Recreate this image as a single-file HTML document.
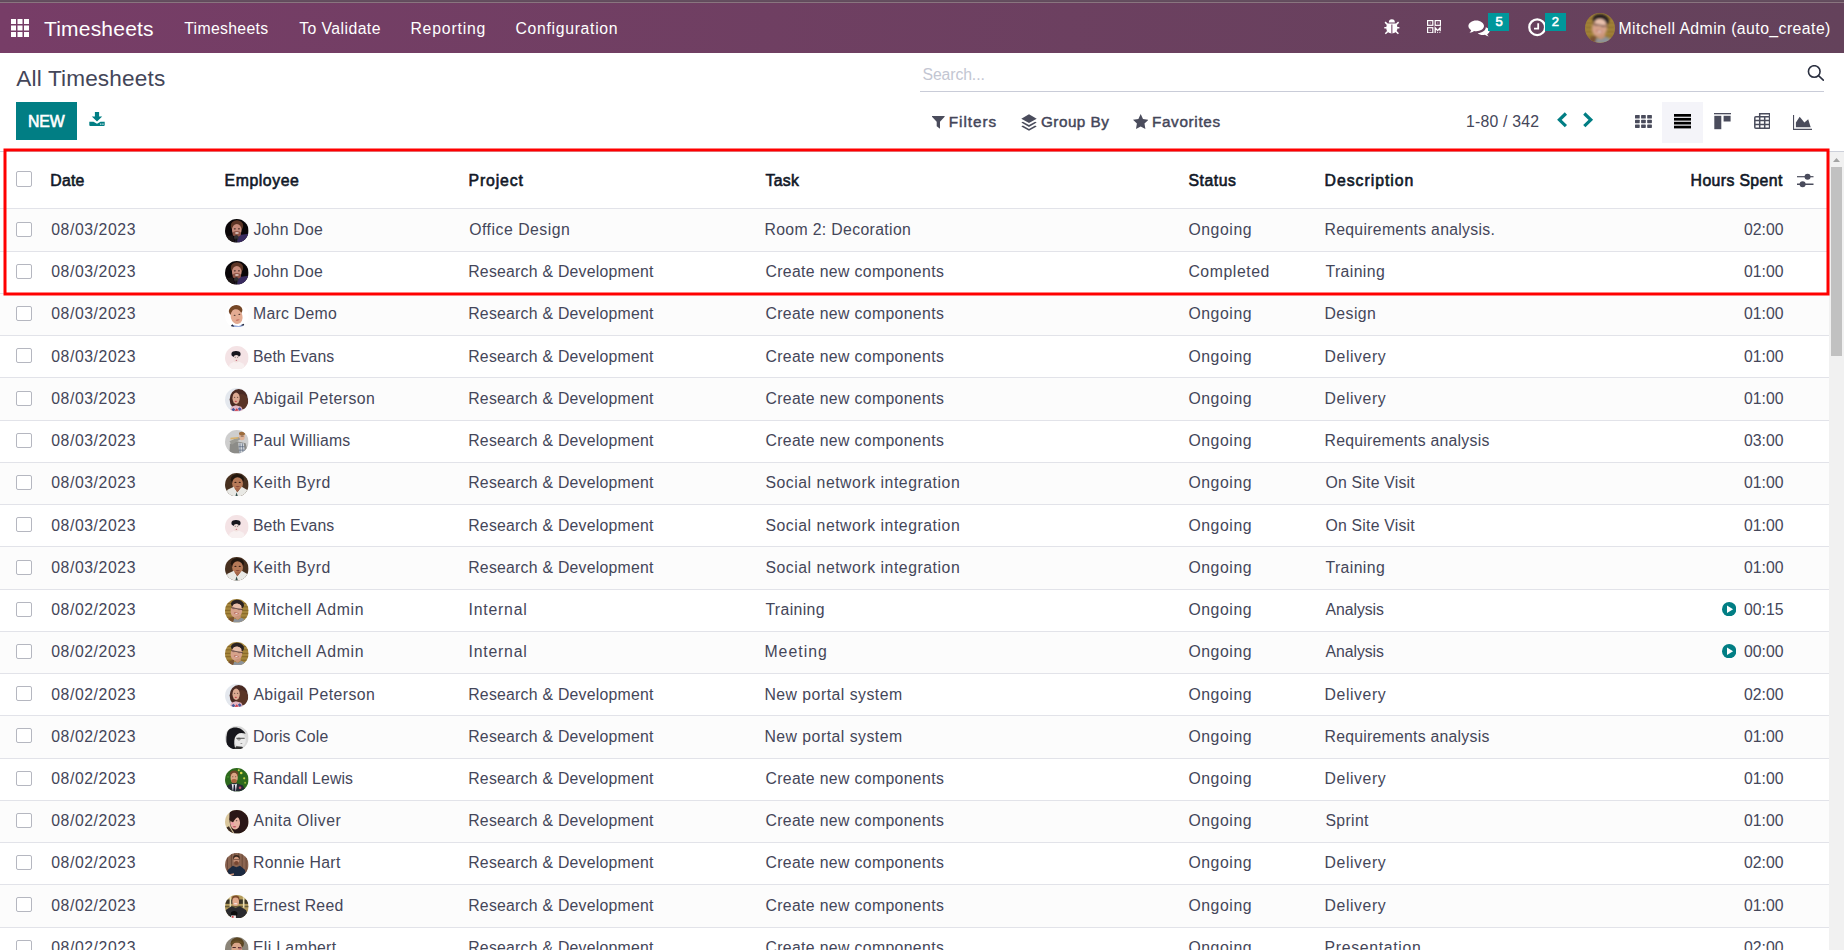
<!DOCTYPE html><html lang="en"><head><meta charset="utf-8"><title>Odoo - All Timesheets</title><style>
*{box-sizing:border-box;margin:0;padding:0}
html,body{width:1844px;height:950px;overflow:hidden;background:#fff}
body{position:relative;font-family:"Liberation Sans",Arial,sans-serif;color:#444659;font-size:15.8px}
.t{position:absolute;white-space:nowrap;line-height:1;display:block}
.abs{position:absolute;display:block}
#strip{left:0;top:0;width:1844px;height:3px;background:linear-gradient(#644e5f 0,#644e5f 1px,#624a5c 1px,#624a5c 2px,#89757f 2px,#89757f 3px)}
#nav{left:0;top:3px;width:1844px;height:50px;background:linear-gradient(90deg,#773d67,#64425b);color:#fff}
#nav .t{color:#fff}
.badge{position:absolute;background:#00979b;color:#fff;height:18px;top:10.400px}
#cp{left:0;top:53px;width:1844px;height:99px;background:#fff;border-bottom:1px solid #cdd0da}
#list{left:0;top:152px;width:1829px;height:798px;overflow:hidden;background:#fff}
.row{position:absolute;left:0;width:1829px;border-top:1px solid #e2e3e9}
.row.odd{background:#fcfcfc}
.cb{position:absolute;left:16px;width:16px;height:15px;border:1px solid #b5b7c0;border-radius:2px;background:#fff}
#sb{left:1829px;top:152px;width:15px;height:798px;background:#f1f1f1}
#sb i{position:absolute;left:2px;top:15px;width:11px;height:189px;background:#c1c1c1}
</style></head><body>
<div id="strip" class="abs"></div>
<header id="nav" class="abs">
<svg class="abs" style="left:11px;top:16px" width="18" height="18" viewBox="0 0 18 18" fill="#fff"><rect x="0.0" y="0.0" width="5" height="5"/><rect x="6.5" y="0.0" width="5" height="5"/><rect x="13.0" y="0.0" width="5" height="5"/><rect x="0.0" y="6.5" width="5" height="5"/><rect x="6.5" y="6.5" width="5" height="5"/><rect x="13.0" y="6.5" width="5" height="5"/><rect x="0.0" y="13.0" width="5" height="5"/><rect x="6.5" y="13.0" width="5" height="5"/><rect x="13.0" y="13.0" width="5" height="5"/></svg>
<a class="t" style="left:43.90px;top:14.92px;font-size:21px;letter-spacing:0.216px;">Timesheets</a>
<nav>
<a class="t" style="left:184.20px;top:18.23px;font-size:15.8px;letter-spacing:0.327px;">Timesheets</a>
<a class="t" style="left:299.20px;top:18.23px;font-size:15.8px;letter-spacing:0.430px;">To Validate</a>
<a class="t" style="left:410.40px;top:18.23px;font-size:15.8px;letter-spacing:0.811px;">Reporting</a>
<a class="t" style="left:515.50px;top:18.23px;font-size:15.8px;letter-spacing:0.677px;">Configuration</a>
</nav>
<svg class="abs" style="left:1384px;top:16px" width="16" height="16" viewBox="0 0 16 16" fill="#fff" stroke="#fff" stroke-linecap="butt">
<path d="M4.800 3.600A3.050 3.450 0 0 1 10.900 3.600z" stroke="none"/>
<path d="M3.600 4.500h8.500c.9 1.200 1.300 2.800 1.300 4.400 0 3.300-2.300 5.400-5.550 5.400s-5.550-2.100-5.550-5.400c0-1.600.4-3.200 1.300-4.400z" stroke="none"/>
<path d="M0.300 8.700h2.600M12.800 8.700h2.600M1.100 3.100l2.500 2.500M14.600 3.100l-2.500 2.500M1.300 14.800l2.500-2.400M14.400 14.800l-2.500-2.400" stroke-width="1.500" fill="none"/>
<path d="M7.850 5.400v8.600" stroke="#7a4a6c" stroke-width="1.100"/></svg>
<svg class="abs" style="left:1427px;top:16.8px" width="14" height="13.500" viewBox="0 0 14 13.500" fill="none" stroke="#fff" stroke-width="1.200">
<rect x="0.600" y="0.600" width="5.200" height="4.700"/><rect x="8.200" y="0.600" width="5.200" height="4.700"/><rect x="0.600" y="7.700" width="5.200" height="5.100"/>
<path d="M3.200 2.300v1.300M10.800 2.300v1.300M3.200 9.600v1.300" stroke-width=".8" opacity=".8"/>
<path d="M8.200 13.400V7.700l2.400 2.900 2.600-2.900v3.500" stroke-width="1.300"/><path d="M10 12.900h1.100M12.200 12.900h1.200" stroke-width="1.100"/></svg>
<svg class="abs" style="left:1468px;top:16.5px" width="22" height="17" viewBox="0 0 22 17" fill="#fff">
<path d="M8.2 0.4C3.9 0.4 0.4 2.9 0.4 6c0 1.7 1.1 3.2 2.8 4.2-.3.9-.9 1.8-1.7 2.5 1.7-.1 3.3-.8 4.5-1.7.7.1 1.4.2 2.2.2 4.3 0 7.8-2.3 7.8-5.2S12.500.4 8.200.4z"/>
<path d="M17.8 7.300c0 3.200-3.600 5.600-8.100 5.900 1.200 1.100 3.100 1.800 5.200 1.800.7 0 1.400-.1 2-.2 1 .8 2.300 1.400 3.800 1.600-.7-.6-1.200-1.400-1.500-2.200 1.500-.8 2.400-2 2.400-3.400 0-1.500-1.500-2.800-3.800-3.500z"/></svg>
<span class="badge" style="left:1488px;width:21px"><span class="t" style="left:7.40px;top:1.20px;font-size:13px;letter-spacing:0.000px;-webkit-text-stroke:0.6px currentColor;">5</span></span>
<svg class="abs" style="left:1528px;top:15.3px" width="18.4" height="18.4" viewBox="0 0 18.4 18.4" fill="none" stroke="#fff">
<circle cx="9.2" cy="9.2" r="7.900" stroke-width="2.300"/><path d="M10.200 5.200v5.400h-4.200" stroke-width="1.800"/></svg>
<span class="badge" style="left:1545px;width:21px"><span class="t" style="left:6.70px;top:1.20px;font-size:13px;letter-spacing:0.000px;-webkit-text-stroke:0.6px currentColor;">2</span></span>
<span class="abs" style="left:1585px;top:10px;width:30px;height:30px"><svg width="100%" height="100%" viewBox="0 0 24 24" style="display:block"><defs><clipPath id="c1"><circle cx="12" cy="12" r="12"/></clipPath><filter id="f1" x="-10%" y="-10%" width="120%" height="120%"><feGaussianBlur stdDeviation="0.7"/></filter></defs><g clip-path="url(#c1)"><rect width="24" height="24" fill="#a6863c"/><g filter="url(#f1)"><path d="M0 4.500h24M0 8h24M0 11.500h24M0 15h24M0 18.500h24" stroke="#7a5c22" stroke-width=".8"/><ellipse cx="12.700" cy="5.600" rx="6.700" ry="4.800" fill="#2b2421" transform="rotate(10 12.700 5.600)"/><ellipse cx="11.600" cy="12" rx="5.900" ry="7.400" fill="#d6a28a" transform="rotate(8 11.600 12)"/><ellipse cx="12.400" cy="7.300" rx="4.300" ry="2.400" fill="#e8c0ac" transform="rotate(10 12.400 7.300)"/><path d="M6.300 8.700l12 2.300" stroke="#4e3c3c" stroke-width="1" opacity=".8"/><ellipse cx="8.700" cy="9.600" rx="1.500" ry=".8" fill="#7a5650" opacity=".6"/><ellipse cx="14.300" cy="10.600" rx="1.500" ry=".8" fill="#7a5650" opacity=".6"/><ellipse cx="11.500" cy="14.600" rx="2.600" ry=".9" fill="#b86a60" transform="rotate(8 11.500 14.600)"/><ellipse cx="11.600" cy="14.800" rx="1.700" ry=".5" fill="#f4ebe8"/><path d="M2 24l2-4.500 5-1.500 0 6z" fill="#7a5232"/><path d="M8 24l1.500-4 4 1 3-2 5 2.500 2 2.500z" fill="#8d939b"/><path d="M9.300 18.300l3.200 2.900 3.700-2.400-.5-2.600z" fill="#c99478"/></g></g></svg></span>
<span class="t" style="left:1618.40px;top:17.93px;font-size:15.8px;letter-spacing:0.437px;">Mitchell Admin (auto_create)</span>
</header>
<section id="cp" class="abs">
<h1 class="t" style="left:16.30px;top:15.17px;font-size:22.6px;letter-spacing:0.152px;font-weight:400;">All Timesheets</h1>
<span class="t" style="left:922.50px;top:14.23px;font-size:15.8px;letter-spacing:-0.116px;color:#c3c6d2;">Search...</span>
<div class="abs" style="left:920px;top:38px;width:904px;height:1px;background:#c9ccd8"></div>
<svg class="abs" style="left:1807px;top:12px" width="17" height="17" viewBox="0 0 17 17" fill="none" stroke="#2b3040" stroke-width="1.600" stroke-linecap="round"><circle cx="7.250" cy="6.500" r="5.800"/><path d="M11.500 10.700l4.800 4.500"/></svg>
<button class="abs" style="left:16px;top:49px;width:61px;height:38px;background:#017e84;border:0;font-family:inherit;text-align:left"><span class="t" style="left:12.00px;top:11.63px;font-size:15.8px;letter-spacing:-0.072px;-webkit-text-stroke:0.6px currentColor;color:#fff;">NEW</span></button>
<svg class="abs" style="left:88.700px;top:59px" width="16" height="14" viewBox="0 0 16 14.500" preserveAspectRatio="none" fill="#017e84">
<path d="M5.900 0h4.200v4.600h3.100L8 9.800 2.800 4.600h3.100z"/><path d="M0.300 10.200h4.200l3.500 2 3.500-2h4.200v3.300a.9.900 0 0 1-.9.900H1.200a.9.900 0 0 1-.9-.9z"/><rect x="11.100" y="12" width="1.300" height="1.100" fill="#fff"/><rect x="13.300" y="12" width="1.300" height="1.100" fill="#fff"/></svg>
<svg class="abs" style="left:932.300px;top:63.3px" width="12.600" height="12.800" viewBox="0 0 12.600 12.800" fill="#4a4c5c"><path d="M0.300 0h12a.4.400 0 0 1 .3.700L8 5.800v7L4.700 10.200V5.800L0 .7a.4.400 0 0 1 .3-.7z"/></svg>
<span class="t m" style="left:948.70px;top:60.95px;font-size:15.3px;letter-spacing:0.985px;-webkit-text-stroke:0.45px currentColor;">Filters</span>
<svg class="abs" style="left:1020.500px;top:60.8px" width="16" height="18.300" viewBox="0 0 16 16" preserveAspectRatio="none" fill="#4a4c5c"><path d="M8 0.300l7.700 3.800L8 7.900 0.300 4.100z"/><path d="M8 9.700L1.900 6.700 0.300 7.500 8 11.300l7.700-3.800-1.600-.8z"/><path d="M8 13.100L1.900 10.100 0.300 10.900 8 14.700l7.700-3.800-1.600-.8z"/></svg>
<span class="t m" style="left:1041.00px;top:60.95px;font-size:15.3px;letter-spacing:0.462px;-webkit-text-stroke:0.45px currentColor;">Group By</span>
<svg class="abs" style="left:1132.700px;top:61px" width="15.400" height="15" viewBox="0 0 15.400 14.600" preserveAspectRatio="none" fill="#4a4c5c"><path d="M7.700 0l2.300 4.900 5.400.7-3.900 3.700.9 5.300-4.700-2.500L3 14.600l.9-5.300L0 5.600l5.400-.7z"/></svg>
<span class="t m" style="left:1151.90px;top:60.95px;font-size:15.3px;letter-spacing:0.668px;-webkit-text-stroke:0.45px currentColor;">Favorites</span>
<span class="t" style="left:1466.10px;top:60.73px;font-size:15.8px;letter-spacing:0.194px;">1-80 / 342</span>
<svg class="abs" style="left:1556px;top:59px" width="12" height="16" viewBox="0 0 12 16" fill="none" stroke="#017e84" stroke-width="3.200"><path d="M9.900 1.500L3.400 7.800l6.500 6.300"/></svg>
<svg class="abs" style="left:1582px;top:59px" width="12" height="16" viewBox="0 0 12 16" fill="none" stroke="#017e84" stroke-width="3.200"><path d="M2.300 1.500l6.500 6.300-6.500 6.300"/></svg>
<div class="abs" style="left:1662px;top:49px;width:41px;height:41px;background:#f4f4f9"></div>
<svg class="abs" style="left:1634.800px;top:62.3px" width="17" height="13" viewBox="0 0 17 13" fill="#4a4c5c"><rect x="0.0" y="0.0" width="4.700" height="3.500" rx=".6"/><rect x="6.1" y="0.0" width="4.700" height="3.500" rx=".6"/><rect x="12.2" y="0.0" width="4.700" height="3.500" rx=".6"/><rect x="0.0" y="4.7" width="4.700" height="3.500" rx=".6"/><rect x="6.1" y="4.7" width="4.700" height="3.500" rx=".6"/><rect x="12.2" y="4.7" width="4.700" height="3.500" rx=".6"/><rect x="0.0" y="9.4" width="4.700" height="3.500" rx=".6"/><rect x="6.1" y="9.4" width="4.700" height="3.500" rx=".6"/><rect x="12.2" y="9.4" width="4.700" height="3.500" rx=".6"/></svg>
<svg class="abs" style="left:1674.400px;top:61.2px" width="17" height="14.500" viewBox="0 0 17 14.500" fill="#000"><rect x="0" y="0.0" width="17" height="2.700"/><rect x="0" y="3.9" width="17" height="2.700"/><rect x="0" y="7.8" width="17" height="2.700"/><rect x="0" y="11.7" width="17" height="2.700"/></svg>
<svg class="abs" style="left:1714px;top:60px" width="17" height="16.500" viewBox="0 0 17 16.500" fill="#4a4c5c"><rect x="0" y="0" width="17" height="1.300"/><rect x="0.300" y="2.800" width="7" height="13.400"/><rect x="9.600" y="2.800" width="7" height="5.700"/></svg>
<svg class="abs" style="left:1753.800px;top:60.3px" width="16.400" height="16" viewBox="0 0 16.400 16" fill="none" stroke="#4a4c5c" stroke-width="1.500"><path d="M5.700 3.800V0.800h9.900v3"/><rect x="0.800" y="3.800" width="14.800" height="11.400" rx="1"/><path d="M0.800 7.600h14.800M0.800 11.400h14.800M5.700 3.800v11.400M10.700 3.800v11.400"/></svg>
<svg class="abs" style="left:1793px;top:61.5px" width="19" height="15" viewBox="0 0 19 15" fill="#4a4c5c"><path d="M0 0h1.100v13.800H19V15H0z"/><path d="M2.900 12.300V7.500L6.700 1.800l4.700 5.600 3.800-3.200 2.500 8.100z"/></svg>
</section>
<main id="list" class="abs">
<div class="abs" style="left:0;top:0;width:1829px;height:56px">
<span class="cb" style="top:19px;height:16px"></span>
<span class="t m" style="left:50.30px;top:21.23px;font-size:15.8px;letter-spacing:0.206px;-webkit-text-stroke:0.6px currentColor;color:#111827;">Date</span>
<span class="t m" style="left:224.50px;top:21.23px;font-size:15.8px;letter-spacing:0.591px;-webkit-text-stroke:0.6px currentColor;color:#111827;">Employee</span>
<span class="t m" style="left:468.50px;top:21.23px;font-size:15.8px;letter-spacing:0.871px;-webkit-text-stroke:0.6px currentColor;color:#111827;">Project</span>
<span class="t m" style="left:765.50px;top:21.23px;font-size:15.8px;letter-spacing:0.273px;-webkit-text-stroke:0.6px currentColor;color:#111827;">Task</span>
<span class="t m" style="left:1188.50px;top:21.23px;font-size:15.8px;letter-spacing:0.523px;-webkit-text-stroke:0.6px currentColor;color:#111827;">Status</span>
<span class="t m" style="left:1324.60px;top:21.23px;font-size:15.8px;letter-spacing:0.967px;-webkit-text-stroke:0.6px currentColor;color:#111827;">Description</span>
<span class="t m" style="left:1690.60px;top:21.23px;font-size:15.8px;letter-spacing:0.388px;-webkit-text-stroke:0.6px currentColor;color:#111827;">Hours Spent</span>
<svg class="abs" style="left:1797px;top:20.80000000000001px" width="16.500" height="14.800" viewBox="0 0 16.500 14.800" fill="#4a4c5c" stroke="#4a4c5c"><path d="M0 3.700h16.500" stroke-width="1.200"/><path d="M0 11.250h16.500" stroke-width="1.500"/><circle cx="10.550" cy="3.700" r="3" stroke="none"/><circle cx="5.600" cy="11.250" r="3" stroke="none"/></svg>
</div>
<div class="row odd" style="top:56px;height:43px">
<span class="cb" style="top:13px"></span>
<span class="t" style="left:51.20px;top:13.00px;font-size:15.8px;letter-spacing:0.580px;">08/03/2023</span>
<span class="abs" style="left:225px;top:10.1px;width:23.600px;height:23.600px"><svg width="100%" height="100%" viewBox="0 0 24 24" style="display:block"><defs><clipPath id="c2"><circle cx="12" cy="12" r="12"/></clipPath><filter id="f2" x="-10%" y="-10%" width="120%" height="120%"><feGaussianBlur stdDeviation="0.6"/></filter></defs><g clip-path="url(#c2)"><rect width="24" height="24" fill="#0a0608"/><g filter="url(#f2)"><path d="M13 16.500l11-1.500v9H10z" fill="#372c5e"/><path d="M0 17.500l8-1 2 7.500H0z" fill="#1c1218"/><ellipse cx="12.200" cy="7" rx="6.300" ry="5.800" fill="#5c3626"/><ellipse cx="12" cy="11.300" rx="4.900" ry="6.300" fill="#c88c7c"/><ellipse cx="12" cy="15" rx="4.300" ry="2.900" fill="#8e5446"/><ellipse cx="10" cy="10" rx="1.100" ry=".7" fill="#3c2420"/><ellipse cx="14.200" cy="10" rx="1.100" ry=".7" fill="#3c2420"/><ellipse cx="12.100" cy="14.300" rx="2" ry=".8" fill="#f0e2de"/><ellipse cx="11.500" cy="18.800" rx="2.300" ry="2.600" fill="#343032"/><rect x="10.700" y="20" width="1.800" height="4" fill="#161616"/></g></g></svg></span>
<span class="t" style="left:253.40px;top:13.00px;font-size:15.8px;letter-spacing:0.266px;">John Doe</span>
<span class="t" style="left:469.20px;top:13.00px;font-size:15.8px;letter-spacing:0.513px;">Office Design</span>
<span class="t" style="left:764.40px;top:13.00px;font-size:15.8px;letter-spacing:0.353px;">Room 2: Decoration</span>
<span class="t" style="left:1188.40px;top:13.00px;font-size:15.8px;letter-spacing:0.577px;">Ongoing</span>
<span class="t" style="left:1324.50px;top:13.00px;font-size:15.8px;letter-spacing:0.295px;">Requirements analysis.</span>
<span class="t" style="left:1744.00px;top:13.00px;font-size:15.8px;letter-spacing:-0.011px;">02:00</span>
</div>
<div class="row" style="top:99px;height:42px">
<span class="cb" style="top:12px"></span>
<span class="t" style="left:51.20px;top:12.00px;font-size:15.8px;letter-spacing:0.580px;">08/03/2023</span>
<span class="abs" style="left:225px;top:9.3px;width:23.600px;height:23.600px"><svg width="100%" height="100%" viewBox="0 0 24 24" style="display:block"><defs><clipPath id="c3"><circle cx="12" cy="12" r="12"/></clipPath><filter id="f3" x="-10%" y="-10%" width="120%" height="120%"><feGaussianBlur stdDeviation="0.6"/></filter></defs><g clip-path="url(#c3)"><rect width="24" height="24" fill="#0a0608"/><g filter="url(#f3)"><path d="M13 16.500l11-1.500v9H10z" fill="#372c5e"/><path d="M0 17.500l8-1 2 7.500H0z" fill="#1c1218"/><ellipse cx="12.200" cy="7" rx="6.300" ry="5.800" fill="#5c3626"/><ellipse cx="12" cy="11.300" rx="4.900" ry="6.300" fill="#c88c7c"/><ellipse cx="12" cy="15" rx="4.300" ry="2.900" fill="#8e5446"/><ellipse cx="10" cy="10" rx="1.100" ry=".7" fill="#3c2420"/><ellipse cx="14.200" cy="10" rx="1.100" ry=".7" fill="#3c2420"/><ellipse cx="12.100" cy="14.300" rx="2" ry=".8" fill="#f0e2de"/><ellipse cx="11.500" cy="18.800" rx="2.300" ry="2.600" fill="#343032"/><rect x="10.700" y="20" width="1.800" height="4" fill="#161616"/></g></g></svg></span>
<span class="t" style="left:253.40px;top:12.00px;font-size:15.8px;letter-spacing:0.266px;">John Doe</span>
<span class="t" style="left:468.20px;top:12.00px;font-size:15.8px;letter-spacing:0.252px;">Research &amp; Development</span>
<span class="t" style="left:765.40px;top:12.00px;font-size:15.8px;letter-spacing:0.359px;">Create new components</span>
<span class="t" style="left:1188.40px;top:12.00px;font-size:15.8px;letter-spacing:0.574px;">Completed</span>
<span class="t" style="left:1325.50px;top:12.00px;font-size:15.8px;letter-spacing:0.386px;">Training</span>
<span class="t" style="left:1744.00px;top:12.00px;font-size:15.8px;letter-spacing:-0.011px;">01:00</span>
</div>
<div class="row odd" style="top:141px;height:42px">
<span class="cb" style="top:12px"></span>
<span class="t" style="left:51.20px;top:12.00px;font-size:15.8px;letter-spacing:0.580px;">08/03/2023</span>
<span class="abs" style="left:225px;top:9.5px;width:23.600px;height:23.600px"><svg width="100%" height="100%" viewBox="0 0 24 24" style="display:block"><defs><clipPath id="c4"><circle cx="12" cy="12" r="12"/></clipPath><filter id="f4" x="-10%" y="-10%" width="120%" height="120%"><feGaussianBlur stdDeviation="0.6"/></filter></defs><g clip-path="url(#c4)"><rect width="24" height="24" fill="#ffffff"/><g filter="url(#f4)"><ellipse cx="10.800" cy="6.800" rx="7" ry="5.600" fill="#754628" transform="rotate(-12 10.800 6.800)"/><ellipse cx="11.800" cy="12.800" rx="6" ry="7.600" fill="#e3ab92" transform="rotate(-14 11.800 12.800)"/><ellipse cx="9.800" cy="11.500" rx="1" ry=".6" fill="#5a4038"/><ellipse cx="14.600" cy="10.600" rx="1" ry=".6" fill="#5a4038"/><ellipse cx="13" cy="16.300" rx="2" ry=".7" fill="#c8786a" transform="rotate(-14 13 16.300)"/><path d="M5 24l2-3 7 1.500 5-2.500 2 4z" fill="#9cafdf"/><path d="M5.500 23l2-2.500 2 2.500zM16 21.500l3-1.500 1 2.500z" fill="#262838"/></g></g></svg></span>
<span class="t" style="left:253.00px;top:12.00px;font-size:15.8px;letter-spacing:0.269px;">Marc Demo</span>
<span class="t" style="left:468.20px;top:12.00px;font-size:15.8px;letter-spacing:0.252px;">Research &amp; Development</span>
<span class="t" style="left:765.40px;top:12.00px;font-size:15.8px;letter-spacing:0.359px;">Create new components</span>
<span class="t" style="left:1188.40px;top:12.00px;font-size:15.8px;letter-spacing:0.577px;">Ongoing</span>
<span class="t" style="left:1324.50px;top:12.00px;font-size:15.8px;letter-spacing:0.443px;">Design</span>
<span class="t" style="left:1744.00px;top:12.00px;font-size:15.8px;letter-spacing:-0.011px;">01:00</span>
</div>
<div class="row" style="top:183px;height:42px">
<span class="cb" style="top:12px"></span>
<span class="t" style="left:51.20px;top:13.00px;font-size:15.8px;letter-spacing:0.580px;">08/03/2023</span>
<span class="abs" style="left:225px;top:9.8px;width:23.600px;height:23.600px"><svg width="100%" height="100%" viewBox="0 0 24 24" style="display:block"><defs><clipPath id="c5"><circle cx="12" cy="12" r="12"/></clipPath><filter id="f5" x="-10%" y="-10%" width="120%" height="120%"><feGaussianBlur stdDeviation="0.6"/></filter></defs><g clip-path="url(#c5)"><rect width="24" height="24" fill="#f4e3e5"/><g filter="url(#f5)"><ellipse cx="12" cy="21" rx="8" ry="5" fill="#f8f0f0"/><ellipse cx="11.500" cy="12.600" rx="3.100" ry="4.100" fill="#f1e1dd"/><ellipse cx="11.200" cy="8.200" rx="4.700" ry="3.200" fill="#17171f"/><ellipse cx="11.500" cy="11.300" rx="2.500" ry="2.200" fill="#efdcd8"/><ellipse cx="10.400" cy="11.400" rx=".6" ry=".4" fill="#3a3038"/><ellipse cx="12.800" cy="11.400" rx=".6" ry=".4" fill="#3a3038"/><ellipse cx="11.600" cy="14.500" rx="0.900" ry="0.500" fill="#b8405c"/></g></g></svg></span>
<span class="t" style="left:253.00px;top:13.00px;font-size:15.8px;letter-spacing:0.034px;">Beth Evans</span>
<span class="t" style="left:468.20px;top:13.00px;font-size:15.8px;letter-spacing:0.252px;">Research &amp; Development</span>
<span class="t" style="left:765.40px;top:13.00px;font-size:15.8px;letter-spacing:0.359px;">Create new components</span>
<span class="t" style="left:1188.40px;top:13.00px;font-size:15.8px;letter-spacing:0.577px;">Ongoing</span>
<span class="t" style="left:1324.50px;top:13.00px;font-size:15.8px;letter-spacing:0.592px;">Delivery</span>
<span class="t" style="left:1744.00px;top:13.00px;font-size:15.8px;letter-spacing:-0.011px;">01:00</span>
</div>
<div class="row odd" style="top:225px;height:43px">
<span class="cb" style="top:13px"></span>
<span class="t" style="left:51.20px;top:13.00px;font-size:15.8px;letter-spacing:0.580px;">08/03/2023</span>
<span class="abs" style="left:225px;top:10.0px;width:23.600px;height:23.600px"><svg width="100%" height="100%" viewBox="0 0 24 24" style="display:block"><defs><clipPath id="c6"><circle cx="12" cy="12" r="12"/></clipPath><filter id="f6" x="-10%" y="-10%" width="120%" height="120%"><feGaussianBlur stdDeviation="0.6"/></filter></defs><g clip-path="url(#c6)"><rect width="24" height="24" fill="#e4e8ee"/><g filter="url(#f6)"><ellipse cx="14" cy="11.700" rx="9.300" ry="10.800" fill="#4a2a22"/><ellipse cx="17" cy="14" rx="6.500" ry="8" fill="#5a3428"/><ellipse cx="11.300" cy="10.500" rx="3.700" ry="5.800" fill="#dcaa92"/><ellipse cx="9.800" cy="9.400" rx=".8" ry=".5" fill="#4a302a"/><ellipse cx="12.800" cy="9.400" rx=".8" ry=".5" fill="#4a302a"/><ellipse cx="11" cy="13.500" rx="1.100" ry="0.550" fill="#c02a3a"/><path d="M4.500 24l2-5 4.500-1.500 5.500 1.500 2.500 5z" fill="#e4b8c4"/><path d="M6.500 22l2-2 2 2-2 2zM13 21l2-1.500 2 2-2 2z" fill="#4a5a9a"/><path d="M9.800 23.500l2-3 2.200 2.500z" fill="#d03a4a"/></g></g></svg></span>
<span class="t" style="left:253.40px;top:13.00px;font-size:15.8px;letter-spacing:0.417px;">Abigail Peterson</span>
<span class="t" style="left:468.20px;top:13.00px;font-size:15.8px;letter-spacing:0.252px;">Research &amp; Development</span>
<span class="t" style="left:765.40px;top:13.00px;font-size:15.8px;letter-spacing:0.359px;">Create new components</span>
<span class="t" style="left:1188.40px;top:13.00px;font-size:15.8px;letter-spacing:0.577px;">Ongoing</span>
<span class="t" style="left:1324.50px;top:13.00px;font-size:15.8px;letter-spacing:0.592px;">Delivery</span>
<span class="t" style="left:1744.00px;top:13.00px;font-size:15.8px;letter-spacing:-0.011px;">01:00</span>
</div>
<div class="row" style="top:268px;height:42px">
<span class="cb" style="top:12px"></span>
<span class="t" style="left:51.20px;top:12.00px;font-size:15.8px;letter-spacing:0.580px;">08/03/2023</span>
<span class="abs" style="left:225px;top:9.3px;width:23.600px;height:23.600px"><svg width="100%" height="100%" viewBox="0 0 24 24" style="display:block"><defs><clipPath id="c7"><circle cx="12" cy="12" r="12"/></clipPath><filter id="f7" x="-10%" y="-10%" width="120%" height="120%"><feGaussianBlur stdDeviation="0.6"/></filter></defs><g clip-path="url(#c7)"><rect width="24" height="24" fill="#cecece"/><g filter="url(#f7)"><path d="M4.500 24l.5-10 7-2.500 9 2 2.500 10.500z" fill="#8c8c88"/><path d="M13.500 13l5.500 .5 1.500 10.500h-6z" fill="#d4d8dc"/><path d="M15.300 13.500v10.500M17.600 13.500l.8 10.500M13.800 17h6M14 20.500h6.500" stroke="#56647a" stroke-width=".7"/><ellipse cx="17.200" cy="6.500" rx="2.900" ry="3.900" fill="#e2b498"/><ellipse cx="17.300" cy="3.600" rx="3.100" ry="1.900" fill="#9c6c3c"/><path d="M16 6.300h3" stroke="#50443c" stroke-width=".7"/><path d="M4.500 11.500l9.500-4.500 1.500 2.500-8.500 5.500z" fill="#9c9c96"/><path d="M5.500 8l8-1v1.600l-8 1z" fill="#d9b26c"/></g></g></svg></span>
<span class="t" style="left:253.00px;top:12.00px;font-size:15.8px;letter-spacing:0.200px;">Paul Williams</span>
<span class="t" style="left:468.20px;top:12.00px;font-size:15.8px;letter-spacing:0.252px;">Research &amp; Development</span>
<span class="t" style="left:765.40px;top:12.00px;font-size:15.8px;letter-spacing:0.359px;">Create new components</span>
<span class="t" style="left:1188.40px;top:12.00px;font-size:15.8px;letter-spacing:0.577px;">Ongoing</span>
<span class="t" style="left:1324.50px;top:12.00px;font-size:15.8px;letter-spacing:0.250px;">Requirements analysis</span>
<span class="t" style="left:1744.00px;top:12.00px;font-size:15.8px;letter-spacing:-0.011px;">03:00</span>
</div>
<div class="row odd" style="top:310px;height:42px">
<span class="cb" style="top:12px"></span>
<span class="t" style="left:51.20px;top:12.00px;font-size:15.8px;letter-spacing:0.580px;">08/03/2023</span>
<span class="abs" style="left:225px;top:9.5px;width:23.600px;height:23.600px"><svg width="100%" height="100%" viewBox="0 0 24 24" style="display:block"><defs><clipPath id="c8"><circle cx="12" cy="12" r="12"/></clipPath><filter id="f8" x="-10%" y="-10%" width="120%" height="120%"><feGaussianBlur stdDeviation="0.6"/></filter></defs><g clip-path="url(#c8)"><rect width="24" height="24" fill="#47301f"/><g filter="url(#f8)"><ellipse cx="12.600" cy="6.300" rx="6.700" ry="5.200" fill="#221610"/><ellipse cx="12.800" cy="10.800" rx="5.500" ry="6.500" fill="#b67a58"/><ellipse cx="10.600" cy="9.600" rx="1.100" ry=".6" fill="#3a2218"/><ellipse cx="15" cy="9.600" rx="1.100" ry=".6" fill="#3a2218"/><ellipse cx="12.900" cy="13.800" rx="2.200" ry=".7" fill="#8a4a3a"/><path d="M0 24l2.500-7 6.500-3 3.500 5.500 4.500-5.500 7 4v6z" fill="#e9e9e5"/><path d="M9 14.500l3.500 5 4.500-5.500c-2.500 2-5.500 2-8 .5z" fill="#a6664a"/><path d="M11.700 19.500l1.500 4.500h-2.700z" fill="#34504e"/></g></g></svg></span>
<span class="t" style="left:253.00px;top:12.00px;font-size:15.8px;letter-spacing:0.490px;">Keith Byrd</span>
<span class="t" style="left:468.20px;top:12.00px;font-size:15.8px;letter-spacing:0.252px;">Research &amp; Development</span>
<span class="t" style="left:765.40px;top:12.00px;font-size:15.8px;letter-spacing:0.536px;">Social network integration</span>
<span class="t" style="left:1188.40px;top:12.00px;font-size:15.8px;letter-spacing:0.577px;">Ongoing</span>
<span class="t" style="left:1325.50px;top:12.00px;font-size:15.8px;letter-spacing:0.205px;">On Site Visit</span>
<span class="t" style="left:1744.00px;top:12.00px;font-size:15.8px;letter-spacing:-0.011px;">01:00</span>
</div>
<div class="row" style="top:352px;height:42px">
<span class="cb" style="top:12px"></span>
<span class="t" style="left:51.20px;top:13.00px;font-size:15.8px;letter-spacing:0.580px;">08/03/2023</span>
<span class="abs" style="left:225px;top:9.7px;width:23.600px;height:23.600px"><svg width="100%" height="100%" viewBox="0 0 24 24" style="display:block"><defs><clipPath id="c9"><circle cx="12" cy="12" r="12"/></clipPath><filter id="f9" x="-10%" y="-10%" width="120%" height="120%"><feGaussianBlur stdDeviation="0.6"/></filter></defs><g clip-path="url(#c9)"><rect width="24" height="24" fill="#f4e3e5"/><g filter="url(#f9)"><ellipse cx="12" cy="21" rx="8" ry="5" fill="#f8f0f0"/><ellipse cx="11.500" cy="12.600" rx="3.100" ry="4.100" fill="#f1e1dd"/><ellipse cx="11.200" cy="8.200" rx="4.700" ry="3.200" fill="#17171f"/><ellipse cx="11.500" cy="11.300" rx="2.500" ry="2.200" fill="#efdcd8"/><ellipse cx="10.400" cy="11.400" rx=".6" ry=".4" fill="#3a3038"/><ellipse cx="12.800" cy="11.400" rx=".6" ry=".4" fill="#3a3038"/><ellipse cx="11.600" cy="14.500" rx="0.900" ry="0.500" fill="#b8405c"/></g></g></svg></span>
<span class="t" style="left:253.00px;top:13.00px;font-size:15.8px;letter-spacing:0.034px;">Beth Evans</span>
<span class="t" style="left:468.20px;top:13.00px;font-size:15.8px;letter-spacing:0.252px;">Research &amp; Development</span>
<span class="t" style="left:765.40px;top:13.00px;font-size:15.8px;letter-spacing:0.536px;">Social network integration</span>
<span class="t" style="left:1188.40px;top:13.00px;font-size:15.8px;letter-spacing:0.577px;">Ongoing</span>
<span class="t" style="left:1325.50px;top:13.00px;font-size:15.8px;letter-spacing:0.205px;">On Site Visit</span>
<span class="t" style="left:1744.00px;top:13.00px;font-size:15.8px;letter-spacing:-0.011px;">01:00</span>
</div>
<div class="row odd" style="top:394px;height:43px">
<span class="cb" style="top:13px"></span>
<span class="t" style="left:51.20px;top:13.00px;font-size:15.8px;letter-spacing:0.580px;">08/03/2023</span>
<span class="abs" style="left:225px;top:10.0px;width:23.600px;height:23.600px"><svg width="100%" height="100%" viewBox="0 0 24 24" style="display:block"><defs><clipPath id="c10"><circle cx="12" cy="12" r="12"/></clipPath><filter id="f10" x="-10%" y="-10%" width="120%" height="120%"><feGaussianBlur stdDeviation="0.6"/></filter></defs><g clip-path="url(#c10)"><rect width="24" height="24" fill="#47301f"/><g filter="url(#f10)"><ellipse cx="12.600" cy="6.300" rx="6.700" ry="5.200" fill="#221610"/><ellipse cx="12.800" cy="10.800" rx="5.500" ry="6.500" fill="#b67a58"/><ellipse cx="10.600" cy="9.600" rx="1.100" ry=".6" fill="#3a2218"/><ellipse cx="15" cy="9.600" rx="1.100" ry=".6" fill="#3a2218"/><ellipse cx="12.900" cy="13.800" rx="2.200" ry=".7" fill="#8a4a3a"/><path d="M0 24l2.500-7 6.500-3 3.500 5.500 4.500-5.500 7 4v6z" fill="#e9e9e5"/><path d="M9 14.500l3.500 5 4.500-5.500c-2.500 2-5.500 2-8 .5z" fill="#a6664a"/><path d="M11.700 19.500l1.500 4.500h-2.700z" fill="#34504e"/></g></g></svg></span>
<span class="t" style="left:253.00px;top:13.00px;font-size:15.8px;letter-spacing:0.490px;">Keith Byrd</span>
<span class="t" style="left:468.20px;top:13.00px;font-size:15.8px;letter-spacing:0.252px;">Research &amp; Development</span>
<span class="t" style="left:765.40px;top:13.00px;font-size:15.8px;letter-spacing:0.536px;">Social network integration</span>
<span class="t" style="left:1188.40px;top:13.00px;font-size:15.8px;letter-spacing:0.577px;">Ongoing</span>
<span class="t" style="left:1325.50px;top:13.00px;font-size:15.8px;letter-spacing:0.386px;">Training</span>
<span class="t" style="left:1744.00px;top:13.00px;font-size:15.8px;letter-spacing:-0.011px;">01:00</span>
</div>
<div class="row" style="top:437px;height:42px">
<span class="cb" style="top:12px"></span>
<span class="t" style="left:51.20px;top:12.00px;font-size:15.8px;letter-spacing:0.580px;">08/02/2023</span>
<span class="abs" style="left:225px;top:9.2px;width:23.600px;height:23.600px"><svg width="100%" height="100%" viewBox="0 0 24 24" style="display:block"><defs><clipPath id="c11"><circle cx="12" cy="12" r="12"/></clipPath><filter id="f11" x="-10%" y="-10%" width="120%" height="120%"><feGaussianBlur stdDeviation="0.7"/></filter></defs><g clip-path="url(#c11)"><rect width="24" height="24" fill="#a6863c"/><g filter="url(#f11)"><path d="M0 4.500h24M0 8h24M0 11.500h24M0 15h24M0 18.500h24" stroke="#7a5c22" stroke-width=".8"/><ellipse cx="12.700" cy="5.600" rx="6.700" ry="4.800" fill="#2b2421" transform="rotate(10 12.700 5.600)"/><ellipse cx="11.600" cy="12" rx="5.900" ry="7.400" fill="#d6a28a" transform="rotate(8 11.600 12)"/><ellipse cx="12.400" cy="7.300" rx="4.300" ry="2.400" fill="#e8c0ac" transform="rotate(10 12.400 7.300)"/><path d="M6.300 8.700l12 2.300" stroke="#4e3c3c" stroke-width="1" opacity=".8"/><ellipse cx="8.700" cy="9.600" rx="1.500" ry=".8" fill="#7a5650" opacity=".6"/><ellipse cx="14.300" cy="10.600" rx="1.500" ry=".8" fill="#7a5650" opacity=".6"/><ellipse cx="11.500" cy="14.600" rx="2.600" ry=".9" fill="#b86a60" transform="rotate(8 11.500 14.600)"/><ellipse cx="11.600" cy="14.800" rx="1.700" ry=".5" fill="#f4ebe8"/><path d="M2 24l2-4.500 5-1.500 0 6z" fill="#7a5232"/><path d="M8 24l1.500-4 4 1 3-2 5 2.500 2 2.500z" fill="#8d939b"/><path d="M9.300 18.300l3.200 2.900 3.700-2.400-.5-2.600z" fill="#c99478"/></g></g></svg></span>
<span class="t" style="left:253.00px;top:12.00px;font-size:15.8px;letter-spacing:0.667px;">Mitchell Admin</span>
<span class="t" style="left:468.60px;top:12.00px;font-size:15.8px;letter-spacing:0.774px;">Internal</span>
<span class="t" style="left:765.40px;top:12.00px;font-size:15.8px;letter-spacing:0.386px;">Training</span>
<span class="t" style="left:1188.40px;top:12.00px;font-size:15.8px;letter-spacing:0.577px;">Ongoing</span>
<span class="t" style="left:1325.50px;top:12.00px;font-size:15.8px;letter-spacing:-0.060px;">Analysis</span>
<span class="t" style="left:1744.00px;top:12.00px;font-size:15.8px;letter-spacing:-0.011px;">00:15</span>
<svg class="abs" style="left:1721.600px;top:12.0px" width="14.400" height="14.400" viewBox="0 0 14.400 14.400"><circle cx="7.200" cy="7.200" r="7.200" fill="#017e84"/><path d="M5 3.400l6.100 3.800L5 11z" fill="#fff"/></svg>
</div>
<div class="row odd" style="top:479px;height:42px">
<span class="cb" style="top:12px"></span>
<span class="t" style="left:51.20px;top:12.00px;font-size:15.8px;letter-spacing:0.580px;">08/02/2023</span>
<span class="abs" style="left:225px;top:9.5px;width:23.600px;height:23.600px"><svg width="100%" height="100%" viewBox="0 0 24 24" style="display:block"><defs><clipPath id="c12"><circle cx="12" cy="12" r="12"/></clipPath><filter id="f12" x="-10%" y="-10%" width="120%" height="120%"><feGaussianBlur stdDeviation="0.7"/></filter></defs><g clip-path="url(#c12)"><rect width="24" height="24" fill="#a6863c"/><g filter="url(#f12)"><path d="M0 4.500h24M0 8h24M0 11.500h24M0 15h24M0 18.500h24" stroke="#7a5c22" stroke-width=".8"/><ellipse cx="12.700" cy="5.600" rx="6.700" ry="4.800" fill="#2b2421" transform="rotate(10 12.700 5.600)"/><ellipse cx="11.600" cy="12" rx="5.900" ry="7.400" fill="#d6a28a" transform="rotate(8 11.600 12)"/><ellipse cx="12.400" cy="7.300" rx="4.300" ry="2.400" fill="#e8c0ac" transform="rotate(10 12.400 7.300)"/><path d="M6.300 8.700l12 2.300" stroke="#4e3c3c" stroke-width="1" opacity=".8"/><ellipse cx="8.700" cy="9.600" rx="1.500" ry=".8" fill="#7a5650" opacity=".6"/><ellipse cx="14.300" cy="10.600" rx="1.500" ry=".8" fill="#7a5650" opacity=".6"/><ellipse cx="11.500" cy="14.600" rx="2.600" ry=".9" fill="#b86a60" transform="rotate(8 11.500 14.600)"/><ellipse cx="11.600" cy="14.800" rx="1.700" ry=".5" fill="#f4ebe8"/><path d="M2 24l2-4.500 5-1.500 0 6z" fill="#7a5232"/><path d="M8 24l1.500-4 4 1 3-2 5 2.500 2 2.500z" fill="#8d939b"/><path d="M9.300 18.300l3.200 2.900 3.700-2.400-.5-2.600z" fill="#c99478"/></g></g></svg></span>
<span class="t" style="left:253.00px;top:12.00px;font-size:15.8px;letter-spacing:0.667px;">Mitchell Admin</span>
<span class="t" style="left:468.60px;top:12.00px;font-size:15.8px;letter-spacing:0.774px;">Internal</span>
<span class="t" style="left:764.40px;top:12.00px;font-size:15.8px;letter-spacing:1.031px;">Meeting</span>
<span class="t" style="left:1188.40px;top:12.00px;font-size:15.8px;letter-spacing:0.577px;">Ongoing</span>
<span class="t" style="left:1325.50px;top:12.00px;font-size:15.8px;letter-spacing:-0.060px;">Analysis</span>
<span class="t" style="left:1744.00px;top:12.00px;font-size:15.8px;letter-spacing:-0.011px;">00:00</span>
<svg class="abs" style="left:1721.600px;top:12.0px" width="14.400" height="14.400" viewBox="0 0 14.400 14.400"><circle cx="7.200" cy="7.200" r="7.200" fill="#017e84"/><path d="M5 3.400l6.100 3.800L5 11z" fill="#fff"/></svg>
</div>
<div class="row" style="top:521px;height:42px">
<span class="cb" style="top:12px"></span>
<span class="t" style="left:51.20px;top:13.00px;font-size:15.8px;letter-spacing:0.580px;">08/02/2023</span>
<span class="abs" style="left:225px;top:9.7px;width:23.600px;height:23.600px"><svg width="100%" height="100%" viewBox="0 0 24 24" style="display:block"><defs><clipPath id="c13"><circle cx="12" cy="12" r="12"/></clipPath><filter id="f13" x="-10%" y="-10%" width="120%" height="120%"><feGaussianBlur stdDeviation="0.6"/></filter></defs><g clip-path="url(#c13)"><rect width="24" height="24" fill="#e4e8ee"/><g filter="url(#f13)"><ellipse cx="14" cy="11.700" rx="9.300" ry="10.800" fill="#4a2a22"/><ellipse cx="17" cy="14" rx="6.500" ry="8" fill="#5a3428"/><ellipse cx="11.300" cy="10.500" rx="3.700" ry="5.800" fill="#dcaa92"/><ellipse cx="9.800" cy="9.400" rx=".8" ry=".5" fill="#4a302a"/><ellipse cx="12.800" cy="9.400" rx=".8" ry=".5" fill="#4a302a"/><ellipse cx="11" cy="13.500" rx="1.100" ry="0.550" fill="#c02a3a"/><path d="M4.500 24l2-5 4.500-1.500 5.500 1.500 2.500 5z" fill="#e4b8c4"/><path d="M6.500 22l2-2 2 2-2 2zM13 21l2-1.500 2 2-2 2z" fill="#4a5a9a"/><path d="M9.800 23.500l2-3 2.200 2.500z" fill="#d03a4a"/></g></g></svg></span>
<span class="t" style="left:253.40px;top:13.00px;font-size:15.8px;letter-spacing:0.417px;">Abigail Peterson</span>
<span class="t" style="left:468.20px;top:13.00px;font-size:15.8px;letter-spacing:0.252px;">Research &amp; Development</span>
<span class="t" style="left:764.40px;top:13.00px;font-size:15.8px;letter-spacing:0.490px;">New portal system</span>
<span class="t" style="left:1188.40px;top:13.00px;font-size:15.8px;letter-spacing:0.577px;">Ongoing</span>
<span class="t" style="left:1324.50px;top:13.00px;font-size:15.8px;letter-spacing:0.592px;">Delivery</span>
<span class="t" style="left:1744.00px;top:13.00px;font-size:15.8px;letter-spacing:-0.011px;">02:00</span>
</div>
<div class="row odd" style="top:563px;height:43px">
<span class="cb" style="top:12px"></span>
<span class="t" style="left:51.20px;top:13.00px;font-size:15.8px;letter-spacing:0.580px;">08/02/2023</span>
<span class="abs" style="left:225px;top:9.9px;width:23.600px;height:23.600px"><svg width="100%" height="100%" viewBox="0 0 24 24" style="display:block"><defs><clipPath id="c14"><circle cx="12" cy="12" r="12"/></clipPath><filter id="f14" x="-10%" y="-10%" width="120%" height="120%"><feGaussianBlur stdDeviation="0.6"/></filter></defs><g clip-path="url(#c14)"><rect width="24" height="24" fill="#dadada"/><g filter="url(#f14)"><ellipse cx="15.500" cy="14.500" rx="5.600" ry="7" fill="#eaeaea"/><path d="M2 8c1-8 14-9 19 0-5-2-9-1-11 4-1 4-1 8 1 12H3C1 18 1 12 2 8z" fill="#19191b"/><path d="M11.500 12.500h8.500" stroke="#3a3a3a" stroke-width=".9"/><ellipse cx="14.200" cy="13.300" rx="1.400" ry="1" fill="none" stroke="#444" stroke-width=".6"/><ellipse cx="16.600" cy="17.800" rx="1.300" ry=".5" fill="#8a8a8a"/><path d="M9 24l2.500-3.500 6 .5 2 3z" fill="#303032"/></g></g></svg></span>
<span class="t" style="left:253.00px;top:13.00px;font-size:15.8px;letter-spacing:0.161px;">Doris Cole</span>
<span class="t" style="left:468.20px;top:13.00px;font-size:15.8px;letter-spacing:0.252px;">Research &amp; Development</span>
<span class="t" style="left:764.40px;top:13.00px;font-size:15.8px;letter-spacing:0.490px;">New portal system</span>
<span class="t" style="left:1188.40px;top:13.00px;font-size:15.8px;letter-spacing:0.577px;">Ongoing</span>
<span class="t" style="left:1324.50px;top:13.00px;font-size:15.8px;letter-spacing:0.250px;">Requirements analysis</span>
<span class="t" style="left:1744.00px;top:13.00px;font-size:15.8px;letter-spacing:-0.011px;">01:00</span>
</div>
<div class="row" style="top:606px;height:42px">
<span class="cb" style="top:12px"></span>
<span class="t" style="left:51.20px;top:12.00px;font-size:15.8px;letter-spacing:0.580px;">08/02/2023</span>
<span class="abs" style="left:225px;top:9.2px;width:23.600px;height:23.600px"><svg width="100%" height="100%" viewBox="0 0 24 24" style="display:block"><defs><clipPath id="c15"><circle cx="12" cy="12" r="12"/></clipPath><filter id="f15" x="-10%" y="-10%" width="120%" height="120%"><feGaussianBlur stdDeviation="0.6"/></filter></defs><g clip-path="url(#c15)"><rect width="24" height="24" fill="#2d691d"/><g filter="url(#f15)"><circle cx="16.500" cy="5" r="1.300" fill="#d8d84a"/><circle cx="19.500" cy="10.500" r="1.100" fill="#c8d040"/><circle cx="14" cy="2.300" r="1" fill="#d0d050"/><circle cx="20.500" cy="15" r="1" fill="#9ab83a"/><circle cx="3" cy="9" r="1.200" fill="#3c8426"/><ellipse cx="9.300" cy="6.300" rx="4.300" ry="3.700" fill="#6c4428"/><ellipse cx="9.300" cy="10" rx="3.700" ry="5.200" fill="#dba585"/><ellipse cx="9.300" cy="13.200" rx="2.900" ry="2.100" fill="#a9633b"/><ellipse cx="7.900" cy="9" rx=".7" ry=".45" fill="#3a2a20"/><ellipse cx="10.800" cy="9" rx=".7" ry=".45" fill="#3a2a20"/><path d="M0.500 24l2-6.500 5-2 4 0 6.500 2 3.500 6.500z" fill="#282a36"/><path d="M6.800 16l2.700 .8 2.700-.8-1.200 8h-3z" fill="#ebebf3"/><path d="M8.900 17.300l1.200 0 .7 6.700h-2.600z" fill="#1a1e2e"/><circle cx="15.300" cy="20" r="1.300" fill="#c65066"/></g></g></svg></span>
<span class="t" style="left:253.00px;top:12.00px;font-size:15.8px;letter-spacing:0.138px;">Randall Lewis</span>
<span class="t" style="left:468.20px;top:12.00px;font-size:15.8px;letter-spacing:0.252px;">Research &amp; Development</span>
<span class="t" style="left:765.40px;top:12.00px;font-size:15.8px;letter-spacing:0.359px;">Create new components</span>
<span class="t" style="left:1188.40px;top:12.00px;font-size:15.8px;letter-spacing:0.577px;">Ongoing</span>
<span class="t" style="left:1324.50px;top:12.00px;font-size:15.8px;letter-spacing:0.592px;">Delivery</span>
<span class="t" style="left:1744.00px;top:12.00px;font-size:15.8px;letter-spacing:-0.011px;">01:00</span>
</div>
<div class="row odd" style="top:648px;height:42px">
<span class="cb" style="top:12px"></span>
<span class="t" style="left:51.20px;top:12.00px;font-size:15.8px;letter-spacing:0.580px;">08/02/2023</span>
<span class="abs" style="left:225px;top:9.4px;width:23.600px;height:23.600px"><svg width="100%" height="100%" viewBox="0 0 24 24" style="display:block"><defs><clipPath id="c16"><circle cx="12" cy="12" r="12"/></clipPath><filter id="f16" x="-10%" y="-10%" width="120%" height="120%"><feGaussianBlur stdDeviation="0.6"/></filter></defs><g clip-path="url(#c16)"><rect width="24" height="24" fill="#d9c69c"/><g filter="url(#f16)"><path d="M5 0h19v24H11C5 20 3.500 11 5 0z" fill="#2a1713"/><ellipse cx="10.300" cy="13" rx="5" ry="6.900" fill="#e7b3a3"/><path d="M4.500 10c1-7 10-9 15-3.500-5-1-9 1-11.500 6.500z" fill="#2a1713"/><ellipse cx="7.600" cy="14" rx="1.800" ry="1.500" fill="#ef9ea8"/><ellipse cx="8" cy="11.300" rx=".9" ry=".5" fill="#3a2422"/><ellipse cx="11.800" cy="11" rx=".9" ry=".5" fill="#3a2422"/><ellipse cx="9.600" cy="17" rx="1.900" ry=".8" fill="#c4566a"/><path d="M0 18.500l4-2 4.500 7.500H0z" fill="#3a2a20"/><path d="M8 24l3-3 9 1 2 2z" fill="#251814"/></g></g></svg></span>
<span class="t" style="left:253.40px;top:12.00px;font-size:15.8px;letter-spacing:0.520px;">Anita Oliver</span>
<span class="t" style="left:468.20px;top:12.00px;font-size:15.8px;letter-spacing:0.252px;">Research &amp; Development</span>
<span class="t" style="left:765.40px;top:12.00px;font-size:15.8px;letter-spacing:0.359px;">Create new components</span>
<span class="t" style="left:1188.40px;top:12.00px;font-size:15.8px;letter-spacing:0.577px;">Ongoing</span>
<span class="t" style="left:1325.50px;top:12.00px;font-size:15.8px;letter-spacing:0.325px;">Sprint</span>
<span class="t" style="left:1744.00px;top:12.00px;font-size:15.8px;letter-spacing:-0.011px;">01:00</span>
</div>
<div class="row" style="top:690px;height:42px">
<span class="cb" style="top:12px"></span>
<span class="t" style="left:51.20px;top:12.00px;font-size:15.8px;letter-spacing:0.580px;">08/02/2023</span>
<span class="abs" style="left:225px;top:9.7px;width:23.600px;height:23.600px"><svg width="100%" height="100%" viewBox="0 0 24 24" style="display:block"><defs><clipPath id="c17"><circle cx="12" cy="12" r="12"/></clipPath><filter id="f17" x="-10%" y="-10%" width="120%" height="120%"><feGaussianBlur stdDeviation="0.6"/></filter></defs><g clip-path="url(#c17)"><rect width="24" height="24" fill="#8b6551"/><g filter="url(#f17)"><path d="M2.500 0v24M6.500 0v24M10 0v10M14 0v10M17.500 0v24M21.500 0v24" stroke="#6c4a3a" stroke-width="1.100"/><ellipse cx="11.600" cy="4.800" rx="3.300" ry="2.700" fill="#38281f"/><ellipse cx="11.600" cy="7.600" rx="2.900" ry="3.900" fill="#d39b7f"/><ellipse cx="11.600" cy="10.200" rx="2.500" ry="2" fill="#774631"/><path d="M8.800 6.800h5.600" stroke="#4a3028" stroke-width=".7"/><path d="M1.500 24l1.500-7 5-4 3.600 1.500 3.600-1.500 5 4 1.800 7z" fill="#1b2940"/><path d="M4.500 21.500l4.500-.8v1.600l-4.500 1z" fill="#d39b7f"/></g></g></svg></span>
<span class="t" style="left:253.00px;top:12.00px;font-size:15.8px;letter-spacing:0.300px;">Ronnie Hart</span>
<span class="t" style="left:468.20px;top:12.00px;font-size:15.8px;letter-spacing:0.252px;">Research &amp; Development</span>
<span class="t" style="left:765.40px;top:12.00px;font-size:15.8px;letter-spacing:0.359px;">Create new components</span>
<span class="t" style="left:1188.40px;top:12.00px;font-size:15.8px;letter-spacing:0.577px;">Ongoing</span>
<span class="t" style="left:1324.50px;top:12.00px;font-size:15.8px;letter-spacing:0.592px;">Delivery</span>
<span class="t" style="left:1744.00px;top:12.00px;font-size:15.8px;letter-spacing:-0.011px;">02:00</span>
</div>
<div class="row odd" style="top:732px;height:43px">
<span class="cb" style="top:12px"></span>
<span class="t" style="left:51.20px;top:13.00px;font-size:15.8px;letter-spacing:0.580px;">08/02/2023</span>
<span class="abs" style="left:225px;top:9.9px;width:23.600px;height:23.600px"><svg width="100%" height="100%" viewBox="0 0 24 24" style="display:block"><defs><clipPath id="c18"><circle cx="12" cy="12" r="12"/></clipPath><filter id="f18" x="-10%" y="-10%" width="120%" height="120%"><feGaussianBlur stdDeviation="0.6"/></filter></defs><g clip-path="url(#c18)"><rect width="24" height="24" fill="#b29a5a"/><g filter="url(#f18)"><rect x="0" y="4.500" width="9" height="4.500" fill="#3b3525"/><rect x="14" y="4.500" width="10" height="4.500" fill="#3b3525"/><rect x="0" y="11" width="24" height="1.500" fill="#6a5e38"/><path d="M5.500 0v13M19 0v13" stroke="#e9deb4" stroke-width="1.600"/><ellipse cx="10.800" cy="3.600" rx="3.800" ry="3" fill="#7c4b2c"/><ellipse cx="10.800" cy="6.900" rx="3.400" ry="4.300" fill="#e2aa8e"/><ellipse cx="10.800" cy="8.800" rx="1.700" ry=".6" fill="#f4e8e4"/><path d="M0 24l.5-8.500 6-4 4.300 1.500 4.300-1.500 6.500 4 2.400 8.500z" fill="#2b2b2f"/><ellipse cx="9.300" cy="19" rx="3.400" ry="2.600" fill="#0e0e10"/><rect x="6.300" y="20.800" width="4.800" height="3.200" fill="#f2eaea"/><circle cx="7.900" cy="22.300" r=".9" fill="#d02030"/></g></g></svg></span>
<span class="t" style="left:253.00px;top:13.00px;font-size:15.8px;letter-spacing:0.238px;">Ernest Reed</span>
<span class="t" style="left:468.20px;top:13.00px;font-size:15.8px;letter-spacing:0.252px;">Research &amp; Development</span>
<span class="t" style="left:765.40px;top:13.00px;font-size:15.8px;letter-spacing:0.359px;">Create new components</span>
<span class="t" style="left:1188.40px;top:13.00px;font-size:15.8px;letter-spacing:0.577px;">Ongoing</span>
<span class="t" style="left:1324.50px;top:13.00px;font-size:15.8px;letter-spacing:0.592px;">Delivery</span>
<span class="t" style="left:1744.00px;top:13.00px;font-size:15.8px;letter-spacing:-0.011px;">01:00</span>
</div>
<div class="row" style="top:775px;height:42px">
<span class="cb" style="top:12px"></span>
<span class="t" style="left:51.20px;top:12.00px;font-size:15.8px;letter-spacing:0.580px;">08/02/2023</span>
<span class="abs" style="left:225px;top:9.1px;width:23.600px;height:23.600px"><svg width="100%" height="100%" viewBox="0 0 24 24" style="display:block"><defs><clipPath id="c19"><circle cx="12" cy="12" r="12"/></clipPath><filter id="f19" x="-10%" y="-10%" width="120%" height="120%"><feGaussianBlur stdDeviation="0.6"/></filter></defs><g clip-path="url(#c19)"><rect width="24" height="24" fill="#8b8579"/><g filter="url(#f19)"><ellipse cx="12.500" cy="6.500" rx="6.800" ry="6" fill="#5a4424"/><ellipse cx="12" cy="12.500" rx="5.400" ry="7.300" fill="#d9a589"/><path d="M5.800 7.500c2-5 10.500-5 12.700-.5-3.200-1.500-9.500-1.500-12.700 .5z" fill="#6a5028"/><path d="M7.600 10.700h3.400M13.200 10.700h3.400" stroke="#4a2a2a" stroke-width="1.100"/><ellipse cx="15.300" cy="11.800" rx="2" ry="1" fill="#b06a6a"/></g></g></svg></span>
<span class="t" style="left:253.00px;top:12.00px;font-size:15.8px;letter-spacing:0.319px;">Eli Lambert</span>
<span class="t" style="left:468.20px;top:12.00px;font-size:15.8px;letter-spacing:0.252px;">Research &amp; Development</span>
<span class="t" style="left:765.40px;top:12.00px;font-size:15.8px;letter-spacing:0.359px;">Create new components</span>
<span class="t" style="left:1188.40px;top:12.00px;font-size:15.8px;letter-spacing:0.577px;">Ongoing</span>
<span class="t" style="left:1324.50px;top:12.00px;font-size:15.8px;letter-spacing:0.690px;">Presentation</span>
<span class="t" style="left:1744.00px;top:12.00px;font-size:15.8px;letter-spacing:-0.011px;">02:00</span>
</div>
</main>
<div id="sb" class="abs"><svg class="abs" style="left:4px;top:6px" width="7" height="4" viewBox="0 0 7 4"><path d="M3.500 0L7 4H0z" fill="#a3a3a3"/></svg><i></i></div>
<svg class="abs" style="left:0;top:140px;pointer-events:none" width="1844" height="170" viewBox="0 140 1844 170"><rect x="5" y="150" width="1823" height="144" fill="none" stroke="#ff0000" stroke-width="3"/></svg>
</body></html>
